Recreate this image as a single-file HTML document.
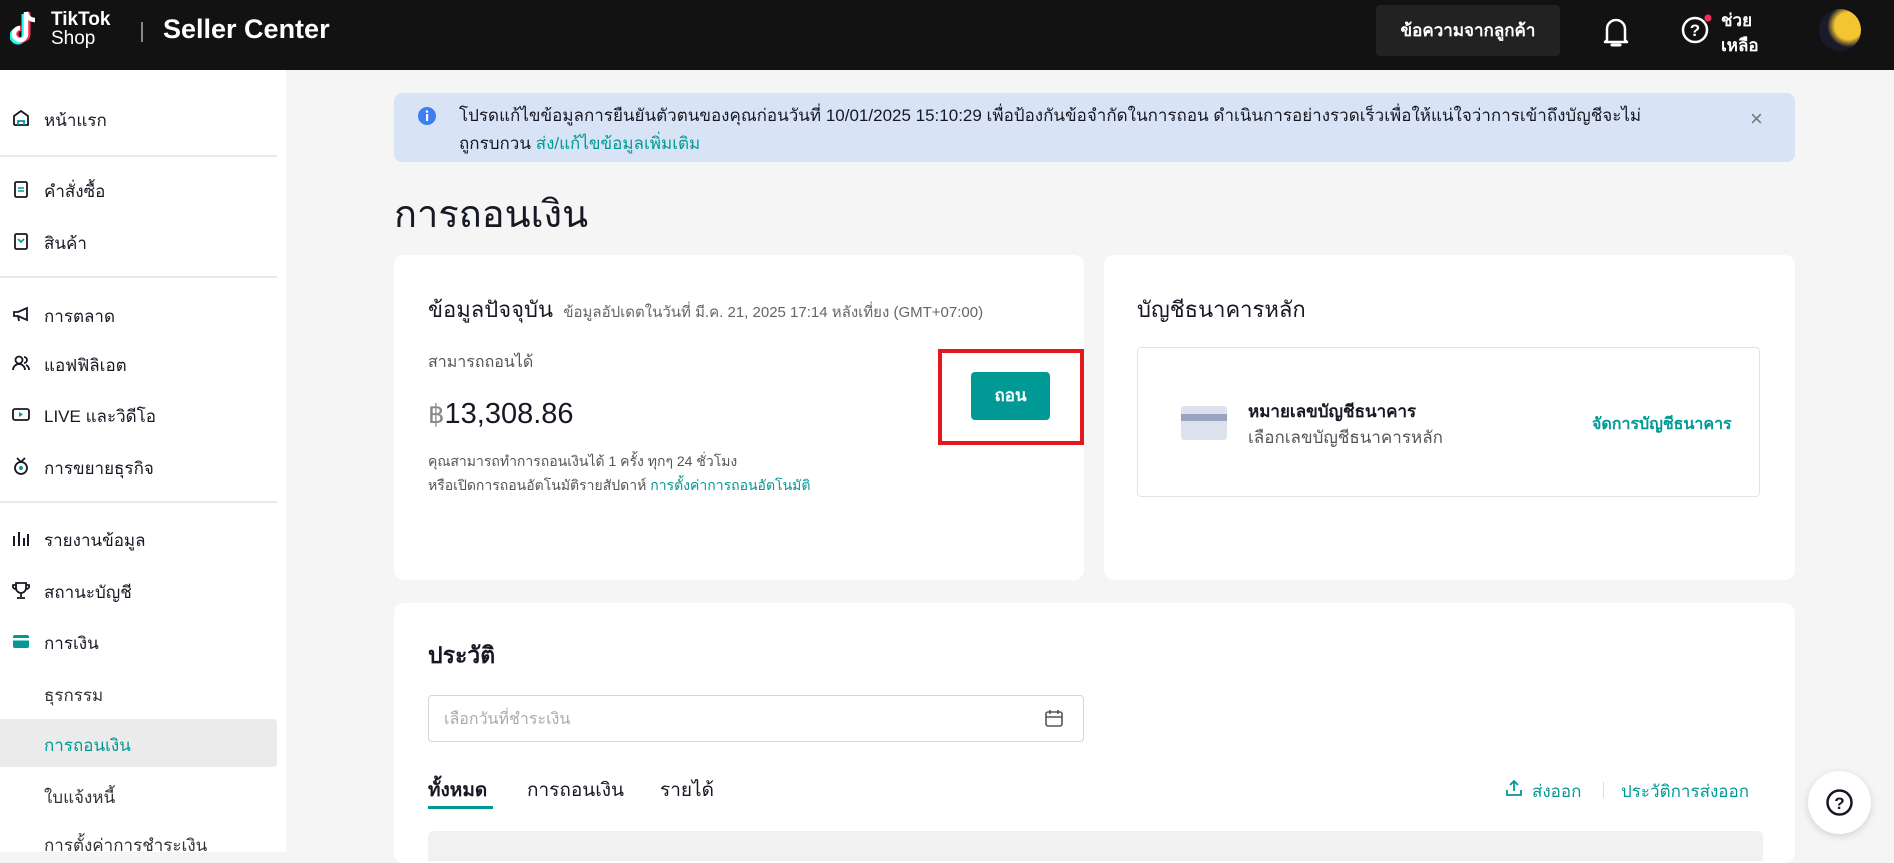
<!DOCTYPE html>
<html><head><meta charset="utf-8"><style>
*{box-sizing:border-box;margin:0;padding:0}
body{width:1894px;height:852px;overflow:hidden;background:#f5f5f5;font-family:"Liberation Sans","Noto Sans CJK SC",sans-serif;color:#161823;position:relative}
.abs{position:absolute}
.hdr{left:0;top:0;width:1894px;height:70px;background:#121212;color:#fff}
.side{left:0;top:70px;width:286px;height:782px;background:#fff}
.si{position:absolute;left:44px;font-size:17px;color:#161823;white-space:nowrap}
.ic{position:absolute;left:12px;width:18px;height:18px}
.div{position:absolute;left:0;width:277px;height:2px;background:#e8e8e8}
.card{background:#fff;border-radius:10px}
.teal{color:#009995}
</style></head><body>
<div class="abs hdr">
 <svg class="abs" style="left:10px;top:8px" width="36" height="40" viewBox="0 0 36 40"><path d="M16 4v22a6 6 0 1 1-6-6" fill="none" stroke="#25f4ee" stroke-width="5" transform="translate(-2,2)"/><path d="M16 4v22a6 6 0 1 1-6-6" fill="none" stroke="#fe2c55" stroke-width="5" transform="translate(2,0)"/><path d="M16 4v22a6 6 0 1 1-6-6M16 4c1 5 4 8 9 8" fill="none" stroke="#fff" stroke-width="4.5"/></svg>
 <div class="abs" style="left:51px;top:10px;font-size:19px;font-weight:bold;line-height:19px">TikTok</div>
 <div class="abs" style="left:51px;top:29px;font-size:19px;line-height:19px">Shop</div>
 <div class="abs" style="left:141px;top:22px;width:2px;height:20px;background:#888"></div>
 <div class="abs" style="left:163px;top:14px;font-size:27px;font-weight:bold">Seller Center</div>
 <div class="abs" style="left:1376px;top:5px;width:184px;height:51px;background:#222;border-radius:4px;font-size:17px;font-weight:bold;text-align:center;line-height:51px">ข้อความจากลูกค้า</div>
 <svg class="abs" style="left:1600px;top:15px" width="32" height="34" viewBox="0 0 32 34"><path d="M7 25V14a9 9 0 0 1 18 0v11l2 2H5z" fill="none" stroke="#fff" stroke-width="2.5" stroke-linejoin="round"/><path d="M12 30h8" stroke="#fff" stroke-width="3" stroke-linecap="round"/></svg>
 <svg class="abs" style="left:1680px;top:13px" width="32" height="32" viewBox="0 0 32 32"><circle cx="15" cy="17" r="12" fill="none" stroke="#fff" stroke-width="2.5"/><text x="15" y="23" font-size="17" font-weight="bold" fill="#fff" text-anchor="middle" font-family="Liberation Sans">?</text><circle cx="28" cy="5" r="3.5" fill="#fe2c55"/></svg>
 <div class="abs" style="left:1721px;top:8px;font-size:17px;font-weight:bold;line-height:25px">ช่วย<br>เหลือ</div>
 <div class="abs" style="left:1819px;top:9px;width:42px;height:42px;border-radius:50%;background:radial-gradient(circle at 70% 40%,#f3c531 0 35%,#1a1a2a 55%)"></div>
</div>
<div class="abs side">
 <svg class="ic" style="top:39px" viewBox="0 0 18 18"><path d="M2 16V7l7-5 7 5v9H2" fill="none" stroke="#161823" stroke-width="1.8"/><path d="M6 16v-4h6v4" fill="none" stroke="#009995" stroke-width="1.8"/></svg>
 <div class="si" style="top:37px">หน้าแรก</div>
 <div class="div" style="top:85px"></div>
 <svg class="ic" style="top:110px" viewBox="0 0 18 18"><rect x="3" y="2" width="12" height="15" rx="1.5" fill="none" stroke="#161823" stroke-width="1.8"/><path d="M6 8h6M6 11h6" stroke="#009995" stroke-width="1.6"/></svg>
 <div class="si" style="top:108px">คำสั่งซื้อ</div>
 <svg class="ic" style="top:162px" viewBox="0 0 18 18"><rect x="3" y="2" width="12" height="15" rx="1.5" fill="none" stroke="#161823" stroke-width="1.8"/><path d="M6 7l3 3 3-3" fill="none" stroke="#009995" stroke-width="1.6"/></svg>
 <div class="si" style="top:160px">สินค้า</div>
 <div class="div" style="top:206px"></div>
 <svg class="ic" style="top:235px" viewBox="0 0 18 18"><path d="M2 7h4l9-4v12l-9-4H2zM6 11l1 5" fill="none" stroke="#161823" stroke-width="1.8"/></svg>
 <div class="si" style="top:233px">การตลาด</div>
 <svg class="ic" style="top:284px" viewBox="0 0 18 18"><circle cx="7" cy="6" r="3.5" fill="none" stroke="#161823" stroke-width="1.8"/><path d="M1 16a6 6 0 0 1 12 0M12 3a3 3 0 0 1 0 6M14 11a5 5 0 0 1 3 5" fill="none" stroke="#161823" stroke-width="1.8"/></svg>
 <div class="si" style="top:282px">แอฟฟิลิเอต</div>
 <svg class="ic" style="top:335px" viewBox="0 0 18 18"><rect x="1" y="4" width="16" height="11" rx="2" fill="none" stroke="#161823" stroke-width="1.8"/><path d="M7 7v5l4-2.5z" fill="#009995"/></svg>
 <div class="si" style="top:333px">LIVE และวิดีโอ</div>
 <svg class="ic" style="top:387px" viewBox="0 0 18 18"><circle cx="9" cy="11" r="6" fill="none" stroke="#161823" stroke-width="1.8"/><path d="M5 1l4 4 4-4" fill="none" stroke="#161823" stroke-width="1.8"/><circle cx="9" cy="11" r="2" fill="#009995"/></svg>
 <div class="si" style="top:385px">การขยายธุรกิจ</div>
 <div class="div" style="top:431px"></div>
 <svg class="ic" style="top:459px" viewBox="0 0 18 18"><path d="M2 17V7M7 17V3M12 17V9M16 17V5" stroke="#161823" stroke-width="2"/></svg>
 <div class="si" style="top:457px">รายงานข้อมูล</div>
 <svg class="ic" style="top:511px" viewBox="0 0 18 18"><path d="M4 2h10v5a5 5 0 0 1-10 0zM9 12v4M5 17h8M4 4H1a3 3 0 0 0 3 4M14 4h3a3 3 0 0 1-3 4" fill="none" stroke="#161823" stroke-width="1.8"/></svg>
 <div class="si" style="top:509px">สถานะบัญชี</div>
 <svg class="ic" style="top:562px" viewBox="0 0 18 18"><rect x="1" y="3" width="16" height="13" rx="2" fill="#009995"/><rect x="1" y="6" width="16" height="2.5" fill="#fff"/></svg>
 <div class="si" style="top:560px">การเงิน</div>
 <div class="si" style="top:612px;color:#333">ธุรกรรม</div>
 <div class="abs" style="left:0;top:649px;width:277px;height:48px;background:#ebebeb;border-radius:0 4px 4px 0"></div>
 <div class="si" style="top:662px;color:#009995">การถอนเงิน</div>
 <div class="si" style="top:714px;color:#333">ใบแจ้งหนี้</div>
 <div class="si" style="top:762px;color:#333">การตั้งค่าการชำระเงิน</div>
</div>

<div class="abs" style="left:394px;top:93px;width:1401px;height:69px;background:#d8e4f5;border-radius:8px"></div>
<svg class="abs" style="left:417px;top:106px" width="20" height="20" viewBox="0 0 20 20"><circle cx="10" cy="10" r="9" fill="#3d7ef0"/><rect x="9" y="8" width="2.2" height="7" fill="#fff"/><circle cx="10" cy="5.5" r="1.3" fill="#fff"/></svg>
<div class="abs" style="left:459px;top:102px;font-size:17px;line-height:28px;width:1280px">โปรดแก้ไขข้อมูลการยืนยันตัวตนของคุณก่อนวันที่ 10/01/2025 15:10:29 เพื่อป้องกันข้อจำกัดในการถอน ดำเนินการอย่างรวดเร็วเพื่อให้แน่ใจว่าการเข้าถึงบัญชีจะไม่<br>ถูกรบกวน <span class="teal">ส่ง/แก้ไขข้อมูลเพิ่มเติม</span></div>
<div class="abs" style="left:1750px;top:106px;font-size:22px;color:#777">×</div>

<div class="abs" style="left:394px;top:183px;font-size:38px">การถอนเงิน</div>

<div class="abs card" style="left:394px;top:255px;width:690px;height:325px"></div>
<div class="abs" style="left:428px;top:292px;font-size:22px">ข้อมูลปัจจุบัน <span style="font-size:15px;color:#666">&nbsp;ข้อมูลอัปเดตในวันที่ มี.ค. 21, 2025 17:14 หลังเที่ยง (GMT+07:00)</span></div>
<div class="abs" style="left:428px;top:350px;font-size:16px;color:#555">สามารถถอนได้</div>
<div class="abs" style="left:428px;top:398px;font-size:29px"><span style="color:#888;font-size:26px">฿</span>13,308.86</div>
<div class="abs" style="left:428px;top:449px;font-size:14px;color:#555;line-height:24px">คุณสามารถทำการถอนเงินได้ 1 ครั้ง ทุกๆ 24 ชั่วโมง<br>หรือเปิดการถอนอัตโนมัติรายสัปดาห์ <span class="teal">การตั้งค่าการถอนอัตโนมัติ</span></div>
<div class="abs" style="left:938px;top:349px;width:146px;height:96px;border:4px solid #e4181c"></div>
<div class="abs" style="left:971px;top:372px;width:79px;height:48px;background:#009995;border-radius:4px;color:#fff;font-size:17px;font-weight:bold;text-align:center;line-height:48px">ถอน</div>

<div class="abs card" style="left:1104px;top:255px;width:691px;height:325px"></div>
<div class="abs" style="left:1137px;top:292px;font-size:22px">บัญชีธนาคารหลัก</div>
<div class="abs" style="left:1137px;top:347px;width:623px;height:150px;border:1px solid #e3e3e3;border-radius:4px"></div>
<svg class="abs" style="left:1181px;top:406px" width="46" height="34" viewBox="0 0 46 34"><rect width="46" height="34" rx="3" fill="#dde1ee"/><rect y="8" width="46" height="7" fill="#9aa3c0"/></svg>
<div class="abs" style="left:1248px;top:398px;font-size:17px;font-weight:bold">หมายเลขบัญชีธนาคาร</div>
<div class="abs" style="left:1248px;top:424px;font-size:17px;color:#555">เลือกเลขบัญชีธนาคารหลัก</div>
<div class="abs teal" style="left:1592px;top:412px;font-size:16px;font-weight:bold">จัดการบัญชีธนาคาร</div>

<div class="abs card" style="left:394px;top:603px;width:1401px;height:260px"></div>
<div class="abs" style="left:428px;top:638px;font-size:23px;font-weight:bold">ประวัติ</div>
<div class="abs" style="left:428px;top:695px;width:656px;height:47px;border:1px solid #d6d6d6;border-radius:4px;background:#fff"></div>
<div class="abs" style="left:444px;top:707px;font-size:16px;color:#aaa">เลือกวันที่ชำระเงิน</div>
<svg class="abs" style="left:1044px;top:708px" width="20" height="20" viewBox="0 0 20 20"><rect x="2" y="4" width="16" height="14" rx="2" fill="none" stroke="#555" stroke-width="1.6"/><path d="M2 9h16M6 2v4M14 2v4" stroke="#555" stroke-width="1.6"/></svg>
<div class="abs" style="left:428px;top:775px;font-size:19px;font-weight:bold">ทั้งหมด</div>
<div class="abs" style="left:428px;top:806px;width:65px;height:3px;background:#009995"></div>
<div class="abs" style="left:527px;top:775px;font-size:19px">การถอนเงิน</div>
<div class="abs" style="left:660px;top:775px;font-size:19px">รายได้</div>
<svg class="abs" style="left:1505px;top:779px" width="18" height="18" viewBox="0 0 18 18"><path d="M9 12V2M5 6l4-4 4 4M2 11v5h14v-5" fill="none" stroke="#009995" stroke-width="1.8"/></svg>
<div class="abs teal" style="left:1532px;top:778px;font-size:17px">ส่งออก</div>
<div class="abs" style="left:1603px;top:782px;width:1px;height:16px;background:#ddd"></div>
<div class="abs teal" style="left:1621px;top:778px;font-size:17px">ประวัติการส่งออก</div>
<div class="abs" style="left:428px;top:831px;width:1335px;height:30px;background:#f1f1f1;border-radius:6px 6px 0 0"></div>
<div class="abs" style="left:1808px;top:771px;width:63px;height:63px;border-radius:50%;background:#fff;box-shadow:0 2px 8px rgba(0,0,0,.15)"></div>
<svg class="abs" style="left:1825px;top:788px" width="29" height="29" viewBox="0 0 29 29"><circle cx="14.5" cy="14.5" r="12" fill="none" stroke="#161823" stroke-width="2.5"/><text x="14.5" y="21" font-size="17" font-weight="bold" fill="#161823" text-anchor="middle" font-family="Liberation Sans">?</text></svg>
</body></html>
